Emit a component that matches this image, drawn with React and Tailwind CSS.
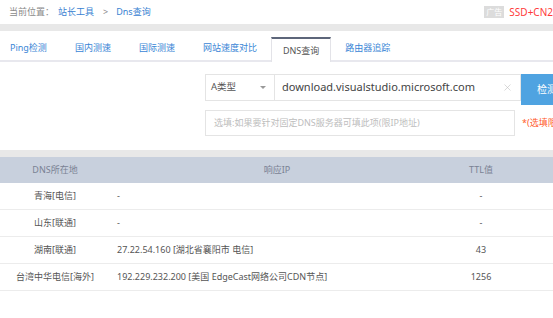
import { X } from 'lucide-react';

const TABS = ['Ping检测', '国内测速', '国际测速', '网站速度对比', 'DNS查询', '路由器追踪'];

const ROWS = [
  { loc: '青海[电信]', ip: '-', ttl: '-' },
  { loc: '山东[联通]', ip: '-', ttl: '-' },
  { loc: '湖南[联通]', ip: '27.22.54.160 [湖北省襄阳市 电信]', ttl: '43' },
  { loc: '台湾中华电信[海外]', ip: '192.229.232.200 [美国 EdgeCast网络公司CDN节点]', ttl: '1256' },
];

const FONT = "font-['Noto_Sans','Noto_Sans_CJK_SC',sans-serif]";

export default function App() {
  return (
    <div className={`w-[553px] h-[318px] overflow-hidden bg-white text-[9px] ${FONT}`}>
      {/* breadcrumb */}
      <div className="h-[24px] flex items-center pl-[9px] whitespace-nowrap overflow-hidden">
        <span className="text-[#8a8a8a]">当前位置：</span>
        <span className="ml-[4px] text-[#3a82d2]">站长工具</span>
        <span className="ml-[9px] text-[#8a8a8a]">&gt;</span>
        <span className="ml-[8px] text-[#3a82d2]">Dns查询</span>
        <div className="ml-auto flex items-center">
          <span className="bg-[#dcdcdc] text-white text-[8px] leading-[12px] px-[2px]">广告</span>
          <span className="ml-[5px] text-[#ff3a3a] text-[10px]">SSD+CN2</span>
        </div>
      </div>
      <div className="h-[7px] bg-[#e8e8e8]" />

      {/* tabs */}
      <div className="h-[31px] flex items-end pl-[10px] border-b-2 border-[#e8e8ee]">
        {TABS.map((t, i) =>
          t === 'DNS查询' ? (
            <div
              key={t}
              className="h-[25px] mb-[-2px] px-[11px] flex items-center bg-white border-t-2 border-t-[#5d667a] border-x border-x-[#e3e3e8] text-[#555] whitespace-nowrap"
            >
              {t}
            </div>
          ) : (
            <div
              key={t}
              className={`h-[24px] flex items-center text-[#3a86d6] whitespace-nowrap ${i === 0 ? 'pr-[14px]' : 'px-[14px]'}`}
            >
              {t}
            </div>
          )
        )}
      </div>

      {/* query form */}
      <div className="pl-[205px] pt-[12px]">
        <div className="flex items-start">
          <div className="shrink-0 w-[70px] h-[27px] border border-[#e4e4e4] flex items-center pl-[5px] pr-[8px] text-[9.5px] text-[#555]">
            <span>A类型</span>
            <span className="ml-auto w-0 h-0 border-l-[3px] border-r-[3px] border-t-[3px] border-l-transparent border-r-transparent border-t-[#999]" />
          </div>
          <div className="shrink-0 w-[246px] h-[27px] border border-l-0 border-[#e4e4e4] flex items-center pl-[7px] pr-[7px] text-[11px] text-[#444]">
            <span className="whitespace-nowrap">download.visualstudio.microsoft.com</span>
            <X className="ml-auto text-[#bbb]" size={11} strokeWidth={1.2} />
          </div>
          <div className="shrink-0 w-[60px] h-[31px] bg-[#4fa3e1] text-white text-[10px] flex items-center pl-[16px] whitespace-nowrap">
            检测
          </div>
        </div>
        <div className="flex items-center mt-[5px] whitespace-nowrap">
          <div className="shrink-0 w-[310px] h-[26px] border border-[#e4e4e4] flex items-center pl-[8px] text-[#bdbdbd]">
            选填:如果要针对固定DNS服务器可填此项(限IP地址)
          </div>
          <span className="shrink-0 ml-[7px] text-[#ff5a2c]">*(选填限IP)</span>
        </div>
      </div>

      {/* result table */}
      <div className="mt-[14px] h-[7px] bg-[#e8e8e8]" />
      <div className="w-[553px]">
        <div className="h-[26px] flex items-center bg-[#c8d0dd] text-[#7a8294]">
          <div className="w-[110px] text-center">DNS所在地</div>
          <div className="w-[334px] text-center">响应IP</div>
          <div className="w-[74px] text-center">TTL值</div>
        </div>
        {ROWS.map((r) => (
          <div key={r.loc} className="h-[27px] flex items-center border-b border-[#ececec] text-[#555]">
            <div className="w-[110px] text-center whitespace-nowrap">{r.loc}</div>
            <div className="w-[334px] pl-[7px] whitespace-nowrap">{r.ip}</div>
            <div className="w-[74px] text-center">{r.ttl}</div>
          </div>
        ))}
      </div>
    </div>
  );
}
